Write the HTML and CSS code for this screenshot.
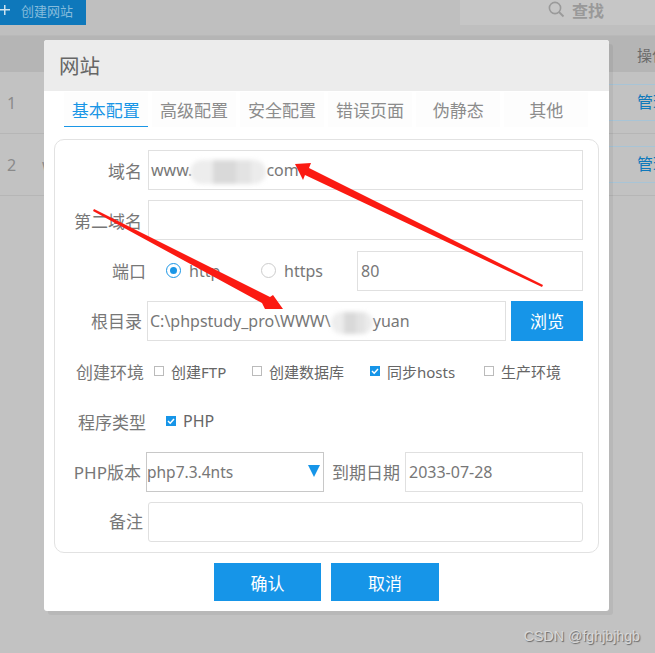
FILE: index.html
```html
<!DOCTYPE html>
<html lang="zh">
<head>
<meta charset="utf-8">
<title>网站</title>
<link rel="stylesheet" href="styles.css">
</head>
<body>
<div class="page">
  <div class="toolbar">
    <div class="create"><span class="plus"></span><span>创建网站</span></div>
    <div class="search">
      <svg class="search-icon" width="17" height="17" viewBox="0 0 17 17"><circle cx="7" cy="7" r="5.6" fill="none" stroke="#9a9a9a" stroke-width="1.6"/><path d="M11 11l4.5 4.5" stroke="#9a9a9a" stroke-width="1.8"/></svg>
      <span>查找</span>
    </div>
  </div>
  <div class="thead"><span class="th-op">操作</span></div>
  <div class="trow"><span class="num">1</span><span class="site"></span><span class="manage">管理</span></div>
  <div class="trow"><span class="num">2</span><span class="site">w</span><span class="manage">管理</span></div>

  <div class="dialog">
    <div class="dialog-title">网站</div>
    <div class="tabs">
      <div class="tab active">基本配置</div>
      <div class="tab">高级配置</div>
      <div class="tab">安全配置</div>
      <div class="tab">错误页面</div>
      <div class="tab">伪静态</div>
      <div class="tab">其他</div>
    </div>
    <div class="panel">
      <div class="row">
        <div class="label inset">域名</div>
        <div class="field grow">www.<span class="smudge smudge-domain"></span>com</div>
      </div>
      <div class="row">
        <div class="label inset">第二域名</div>
        <div class="field grow"></div>
      </div>
      <div class="row">
        <div class="label wide">端口</div>
        <div class="radios">
          <span class="radio checked"></span><span class="radio-text first">http</span>
          <span class="radio"></span><span class="radio-text">https</span>
        </div>
        <div class="field port">80</div>
      </div>
      <div class="row">
        <div class="label inset">根目录</div>
        <div class="field grow root">C:\phpstudy_pro\WWW\<span class="smudge smudge-root"></span>yuan</div>
        <div class="btn browse">浏览</div>
      </div>
      <div class="row">
        <div class="label env-label">创建环境</div>
        <div class="checks">
          <div class="check c1"><span class="box"></span>创建FTP</div>
          <div class="check c2"><span class="box"></span>创建数据库</div>
          <div class="check c3"><span class="box on"><svg width="10" height="10" viewBox="0 0 10 10"><path d="M2 5l2.2 2.2L8 3" fill="none" stroke="#fff" stroke-width="1.5"/></svg></span>同步hosts</div>
          <div class="check"><span class="box"></span>生产环境</div>
        </div>
      </div>
      <div class="row">
        <div class="label wide">程序类型</div>
        <div class="check php"><span class="box on"><svg width="10" height="10" viewBox="0 0 10 10"><path d="M2 5l2.2 2.2L8 3" fill="none" stroke="#fff" stroke-width="1.5"/></svg></span>PHP</div>
      </div>
      <div class="row">
        <div class="label php-label">PHP版本</div>
        <div class="select"><span>php7.3.4nts</span><span class="caret"></span></div>
        <div class="label date-label">到期日期</div>
        <div class="field grow date">2033-07-28</div>
      </div>
      <div class="row">
        <div class="label note-label">备注</div>
        <div class="field grow note"></div>
      </div>
    </div>
    <div class="actions">
      <div class="btn action">确认</div>
      <div class="btn action">取消</div>
    </div>
  </div>

  <svg class="arrows" width="655" height="653" viewBox="0 0 655 653">
    <polygon fill="#fb1a12" points="295,164 311,163 309,168 543,285 542,287 305,175 303,180"/>
    <polygon fill="#fb1a12" points="94,209 270,297 273,295 283,309 265,309 262,303 93,211"/>
  </svg>
  <div class="watermark">CSDN @fghjbjhgb</div>
</div>
</body>
</html>
```
FILE: styles.css
```css
* { box-sizing: border-box; }
html, body { margin: 0; padding: 0; }
body {
  width: 655px;
  height: 653px;
  overflow: hidden;
  font-family: "Noto Sans", "Noto Sans CJK SC", sans-serif;
  font-size: 17px;
  color: #666;
}
.page {
  position: relative;
  width: 655px;
  height: 653px;
  overflow: hidden;
  background: #c2c2c2;
}

/* dimmed page behind the dialog */
.toolbar {
  display: flex;
  justify-content: space-between;
  height: 35px;
  background: #bfbfbf;
}
.create {
  display: flex;
  align-items: center;
  width: 86px;
  height: 25px;
  padding-bottom: 5px;
  background: #0e78bb;
  color: #85bcdc;
  font-size: 13px;
  gap: 11px;
}
.plus {
  width: 10px;
  height: 10px;
  background:
    linear-gradient(#cfe3ef, #cfe3ef) 0 4px / 10px 1.5px no-repeat,
    linear-gradient(#cfe3ef, #cfe3ef) 4px 0 / 1.5px 10px no-repeat;
}
.search {
  display: flex;
  align-items: center;
  width: 195px;
  height: 25px;
  padding: 0 0 6px 88px;
  gap: 7px;
  background: #c6c6c6;
  color: #999;
  font-size: 16px;
  font-weight: 700;
}
.thead {
  display: flex;
  justify-content: flex-end;
  align-items: center;
  height: 37px;
  padding-top: 2px;
  background: linear-gradient(#b9b9b9 0 1px, #b5b5b5 1px);
  color: #6b6b6b;
  font-size: 15px;
}
.th-op { width: 18px; white-space: nowrap; }
.trow {
  display: flex;
  align-items: center;
  height: 62px;
  border-bottom: 1px solid #b6b6b6;
  color: #8a8a8a;
  font-size: 16px;
}
.num { width: 42px; padding-left: 7px; }
.site { flex: 1; }
.manage {
  width: 120px;
  height: 37px;
  padding-left: 102px;
  margin-top: -1px;
  border-top: 1px solid #a8c4d6;
  border-bottom: 1px solid #a8c4d6;
  line-height: 34px;
  white-space: nowrap;
  color: #0e78bb;
  overflow: hidden;
}

/* dialog */
.dialog {
  position: absolute;
  left: 44px;
  top: 40px;
  width: 565px;
  height: 571px;
  background: #fff;
  border-radius: 3px;
  box-shadow: 4px 4px 0 rgba(0, 0, 0, .05);
}
.dialog-title {
  height: 51px;
  padding: 11px 0 0 15px;
  background: #ececec;
  border-radius: 3px 3px 0 0;
  font-size: 20.5px;
  line-height: 30px;
  color: #666;
}
.tabs {
  display: flex;
  gap: 4.4px;
  height: 36px;
  margin-left: 20px;
  padding-top: 1px;
}
.tab {
  width: 83.7px;
  height: 35px;
  text-align: center;
  line-height: 38px;
  color: #8c8c8c;
  background: #fdfdfd;
}
.tab.active {
  color: #1a96e6;
  border-bottom: 1px solid #1a96e6;
}
.panel {
  display: flex;
  flex-direction: column;
  gap: 10.3px;
  width: 545px;
  height: 414px;
  margin: 12px 0 0 10px;
  padding: 10px 15px 10px 0;
  background: #fff;
  border: 1px solid #e2e2e2;
  border-radius: 10px;
}
.row {
  display: flex;
  align-items: center;
  height: 40px;
  flex: none;
}
.label {
  flex: none;
  width: 88px;
  text-align: right;
  color: #777;
  white-space: nowrap;
}
.label.inset { padding-right: 1px; }
.label.wide { width: 91px; }
.label.note-label { padding-bottom: 3px; }
.field {
  height: 40px;
  margin-left: 5px;
  padding-left: 2px;
  border: 1px solid #e0e0e0;
  line-height: 38px;
  color: #777;
  font-size: 16px;
  white-space: nowrap;
  background: #fff;
}
.grow { flex: 1; }
.root { margin-left: 4px; margin-right: 5px; }
.port { width: 226px; margin-left: 0; padding-left: 3px; }
.note { border-radius: 3px; }
.date { margin-left: 5px; padding-left: 3px; }
.smudge {
  display: inline-block;
  vertical-align: middle;
  border-radius: 12px;
  background: linear-gradient(90deg, #ededed 0 30%, #d9d9d9 30% 60%, #e3e3e3 60% 80%, #ececec 80%);
  filter: blur(2px);
}
.smudge-domain { width: 76px; height: 24px; margin: 0 0 0 -2px; }
.smudge-root { width: 42px; height: 22px; }

.radios {
  display: flex;
  align-items: center;
  flex: none;
  width: 211px;
  padding-left: 20px;
  font-size: 16px;
  color: #777;
}
.radio {
  position: relative;
  flex: none;
  width: 15px;
  height: 15px;
  border: 1px solid #ccc;
  border-radius: 50%;
}
.radio.checked { border-color: #1a96e6; }
.radio.checked::after {
  content: "";
  position: absolute;
  left: 3px;
  top: 3px;
  width: 7px;
  height: 7px;
  border-radius: 50%;
  background: #1a96e6;
}
.radio-text { margin-left: 8px; }
.radio-text.first { width: 72px; }

.btn {
  display: flex;
  align-items: center;
  justify-content: center;
  color: #fff;
  background: #1695e8;
}
.browse { flex: none; width: 72px; height: 40px; }

.label.env-label { width: 89px; }
.checks {
  display: flex;
  align-items: center;
  padding-left: 10px;
}
.check {
  display: flex;
  align-items: center;
  gap: 7px;
  font-size: 15px;
  color: #666;
  white-space: nowrap;
}
.c1 { width: 98px; }
.c2 { width: 118px; }
.c3 { width: 114px; }
.box {
  display: flex;
  flex: none;
  width: 10px;
  height: 10px;
  border: 1px solid #bbb;
}
.box.on { border: 0; background: #1695e8; }
.check.php { padding-left: 20px; font-size: 16px; }

.label.php-label { width: 86px; }
.select {
  display: flex;
  align-items: center;
  justify-content: space-between;
  flex: none;
  width: 178px;
  height: 40px;
  margin-left: 5px;
  padding: 0 3px 0 0;
  border: 1px solid #c8c8c8;
  font-size: 15.5px;
  color: #777;
}
.caret {
  width: 0;
  height: 0;
  margin-top: -1px;
  border-left: 6px solid transparent;
  border-right: 6px solid transparent;
  border-top: 12px solid #1695e8;
}
.label.date-label { width: 76px; }

.actions {
  display: flex;
  justify-content: center;
  gap: 10px;
  margin: 10px 0 0 -0.5px;
}
.action { width: 107.5px; height: 38px; }

.arrows {
  position: absolute;
  left: 0;
  top: 0;
  pointer-events: none;
}
.watermark {
  position: absolute;
  right: 15px;
  bottom: 9px;
  font-family: "Liberation Sans", sans-serif;
  font-size: 14.2px;
  color: #d9d9d9;
  text-shadow: 1px 1px 1px #666;
}
```
